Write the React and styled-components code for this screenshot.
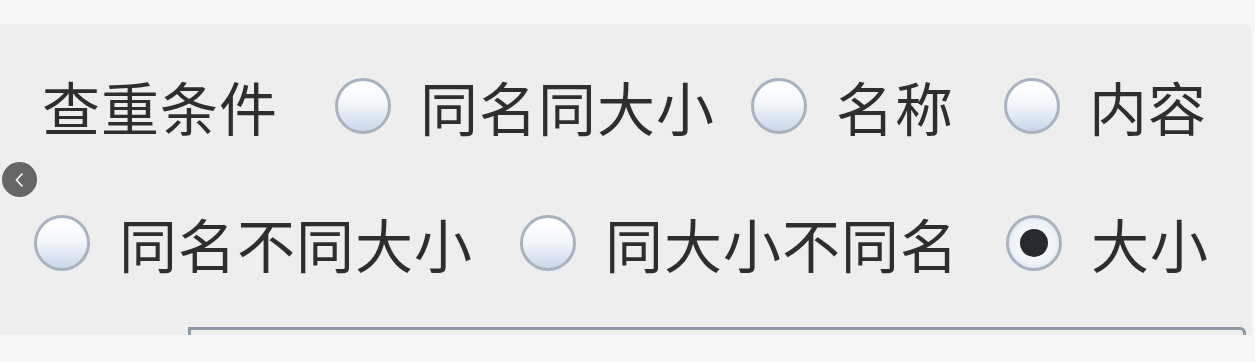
import React from 'react'
import styled, { createGlobalStyle } from 'styled-components'

const Global = createGlobalStyle`
  html, body {
    margin: 0;
    padding: 0;
    background: #f6f6f6;
    font-family: "Noto Sans CJK SC", "Noto Sans", sans-serif;
  }
`;

const Page = styled.div`
  position: relative;
  width: 1255px;
  height: 362px;
  padding-top: 24px;
  box-sizing: border-box;
  background: #f6f6f6;
  overflow: hidden;
`;

const Panel = styled.div`
  width: 1252px;
  height: 311px;
  background: #eeeeee;
  border-top-right-radius: 8px;
  padding-top: 47px;
  box-sizing: border-box;
  overflow: hidden;
`;

const Row = styled.div`
  display: flex;
  align-items: center;
  height: 70px;
  padding-left: ${p => p.$indent}px;
  margin-bottom: ${p => p.$after || 0}px;
`;

const Label = styled.span`
  font-size: 58px;
  line-height: 1;
  letter-spacing: 1px;
  color: #2e2e2e;
  white-space: nowrap;
`;

const Option = styled.label`
  display: flex;
  align-items: center;
  gap: 29px;
  margin-left: ${p => p.$space}px;
`;

const Radio = styled.span`
  position: relative;
  width: 56px;
  height: 56px;
  box-sizing: border-box;
  border-radius: 50%;
  border: 3px solid #a9b3c0;
  background: ${p => (p.$checked
    ? 'radial-gradient(circle, #ffffff 0%, #eef3f9 60%, #c9d8ea 100%)'
    : 'linear-gradient(180deg, #ffffff 0%, #f4f7fb 45%, #c9d8ea 100%)')};
  flex: none;

  &::after {
    content: '';
    display: ${p => (p.$checked ? 'block' : 'none')};
    position: absolute;
    left: 50%;
    top: 50%;
    width: 28px;
    height: 28px;
    margin: -14px 0 0 -14px;
    border-radius: 50%;
    background: #262a2e;
  }
`;

const Field = styled.div`
  margin-left: 188px;
  width: 1058px;
  height: 40px;
  margin-top: 49px;
  box-sizing: border-box;
  border: 3px solid #8e98a7;
  border-bottom: none;
  border-top-right-radius: 6px;
  background: #eeeeee;
`;

const BackButton = styled.button`
  position: absolute;
  left: 2px;
  top: 162px;
  width: 35px;
  height: 35px;
  border-radius: 50%;
  border: none;
  padding: 0;
  background: #666666;
  display: flex;
  align-items: center;
  justify-content: center;
`;

const row1 = [
  { text: '同名同大小', space: 57 },
  { text: '名称', space: 36 },
  { text: '内容', space: 50 },
];

const row2 = [
  { text: '同名不同大小', space: 0 },
  { text: '同大小不同名', space: 47 },
  { text: '大小', space: 47, checked: true },
];

export default function App() {
  return (
    <Page>
      <Global />
      <Panel>
        <Row $indent={42} $after={67}>
          <Label>查重条件</Label>
          {row1.map(o => (
            <Option key={o.text} $space={o.space}>
              <Radio $checked={o.checked} />
              <Label>{o.text}</Label>
            </Option>
          ))}
        </Row>
        <Row $indent={34}>
          {row2.map(o => (
            <Option key={o.text} $space={o.space}>
              <Radio $checked={o.checked} />
              <Label>{o.text}</Label>
            </Option>
          ))}
        </Row>
        <Field />
      </Panel>
      <BackButton aria-label="back">
        <svg width="18" height="18" viewBox="0 0 18 18">
          <path d="M11.5 2.5 L5.5 9 L11.5 15.5" fill="none" stroke="#ffffff" strokeWidth="1.6" />
        </svg>
      </BackButton>
    </Page>
  )
}
